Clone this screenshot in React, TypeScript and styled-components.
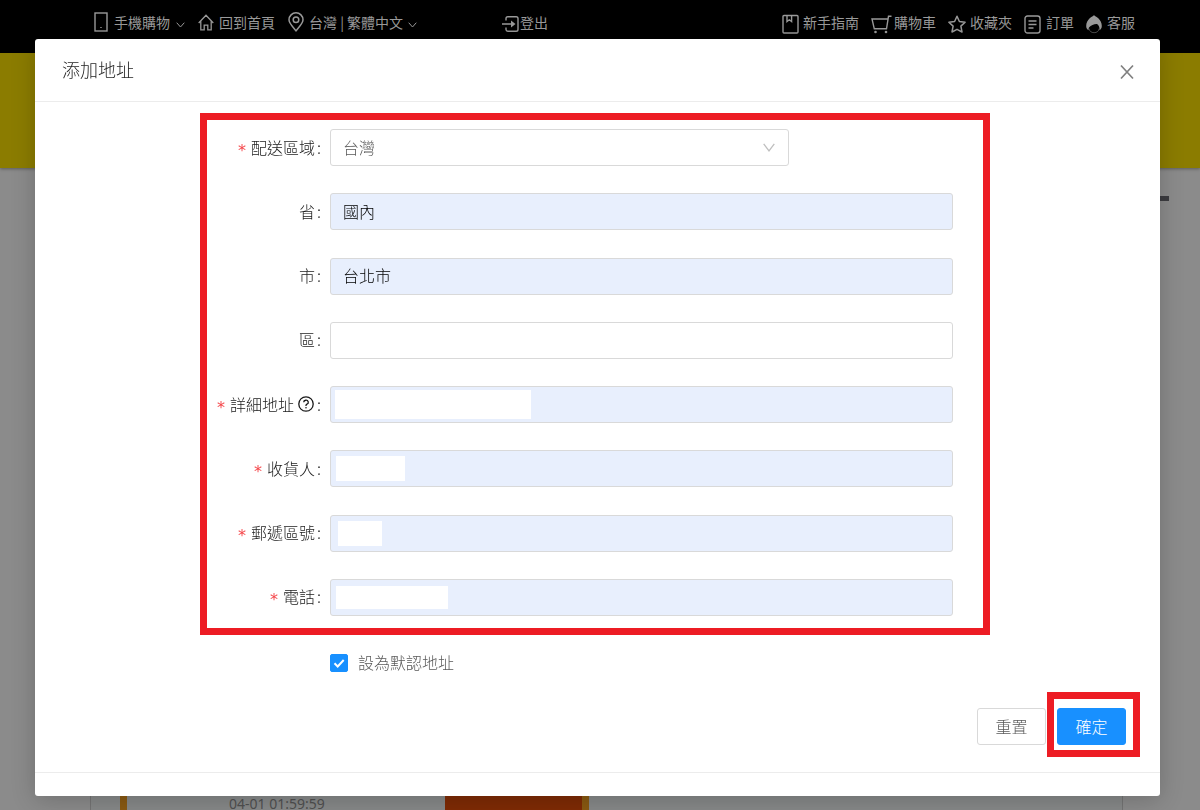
import React, { useState } from "react";
import styled, { createGlobalStyle, css } from "styled-components";

const GlobalStyle = createGlobalStyle`
  *, *::before, *::after { box-sizing: border-box; }
  body {
    margin: 0;
    font-family: "Noto Sans CJK TC", "Noto Sans", sans-serif;
    font-weight: 300;
    color: #333;
  }
  button, input, select { font: inherit; }
`;

const Page = styled.div`
  display: flex;
  flex-direction: column;
  height: 100vh;
  overflow: hidden;
  background: #8b8b8b;
`;

const TopBar = styled.header`
  display: flex;
  align-items: flex-start;
  justify-content: space-between;
  flex: none;
  height: 53px;
  padding: 12px 65px 0 94px;
  background: #000;
`;

const NavGroup = styled.nav<{ $gap: number }>`
  display: flex;
  align-items: center;
  gap: ${(p) => p.$gap}px;
`;

const NavLink = styled.a<{ $gap?: number; $push?: boolean; $lowIcon?: boolean }>`
  display: flex;
  align-items: center;
  gap: ${(p) => p.$gap ?? 5}px;
  margin-left: ${(p) => (p.$push ? 72 : 0)}px;
  height: 20px;
  font-size: 14px;
  line-height: 20px;
  font-weight: 400;
  white-space: nowrap;
  color: #9a9a9a;
  text-decoration: none;

  svg {
    margin-top: ${(p) => (p.$lowIcon ? 4 : 0)}px;
  }
`;

const Icon = styled.svg`
  display: block;
  flex: none;
  fill: none;
  stroke: currentColor;
`;

const NavChevron = styled(Icon)`
  align-self: flex-end;
  margin-bottom: 4px;
`;

const Banner = styled.div`
  flex: none;
  height: 115px;
  background: #8b7c00;
  box-shadow: 0 1px 3px rgba(0, 0, 0, 0.35);
`;

const Backdrop = styled.main`
  display: flex;
  flex-direction: column;
  flex: 1;
  justify-content: space-between;
  padding: 28px 31px 0 90px;
`;

const SideMark = styled.div`
  align-self: flex-end;
  width: 24px;
  height: 5px;
  background: #3c3c40;
`;

const OrderCard = styled.section`
  display: flex;
  align-items: stretch;
  height: 60px;
  margin-right: 46px;
  padding-left: 29px;
  border: solid #747474;
  border-width: 0 1px;
  background: #878989;
`;

const OrderTime = styled.time`
  display: flex;
  align-items: flex-end;
  width: 318px;
  padding-left: 102px;
  font: 400 14px/12px "Noto Sans", sans-serif;
  color: #505050;
`;

const Stripe = styled.div`
  width: 7px;
  background: #8a5a12;
`;

const OrderPhoto = styled.div`
  width: 137px;
  background: #7f2b05;
`;

const Overlay = styled.div`
  position: fixed;
  inset: 0;
  overflow: auto;
  padding: 39px 40px 14px 35px;
`;

const Dialog = styled.section`
  border-radius: 3px;
  background: #fff;
  box-shadow: 0 4px 24px rgba(0, 0, 0, 0.2);
`;

const DialogHeader = styled.header`
  display: flex;
  align-items: center;
  justify-content: space-between;
  height: 63px;
  padding: 0 26px 0 27px;
  border-bottom: 1px solid #ececec;
`;

const Title = styled.h1`
  margin: 0;
  padding-bottom: 2px;
  font-size: 18px;
  line-height: 26px;
  font-weight: 300;
  color: #262626;
`;

const CloseButton = styled.button`
  display: flex;
  padding: 3px 0 0;
  border: 0;
  background: none;
  color: #808080;
  cursor: pointer;
`;

const HighlightedFields = styled.div`
  display: flex;
  flex-direction: column;
  justify-content: space-between;
  min-height: 522px;
  margin: 11px 170px 0 165px;
  padding: 9px 30px 12px 0;
  border: 7px solid #ed1c24;
`;

const Row = styled.div`
  display: grid;
  grid-template-columns: 123px minmax(0, 1fr);
  align-items: center;
`;

const Label = styled.label<{ $required?: boolean }>`
  display: flex;
  align-items: center;
  justify-content: flex-end;
  padding: 0 9px 2px 0;
  font-size: 16px;
  line-height: 24px;
  white-space: nowrap;
  color: #1a1a1a;

  ${(p) =>
    p.$required &&
    css`
      &::before {
        content: "*";
        padding-top: 8px;
        margin-right: 5px;
        font-family: "DejaVu Sans", sans-serif;
        font-weight: 400;
        color: #f5474b;
      }
    `}

  &::after {
    content: ":";
    margin-left: 2px;
  }

  svg {
    margin: 0 1px 0 4px;
  }
`;

const Control = styled.div<{ $narrow?: boolean }>`
  position: relative;
  max-width: ${(p) => (p.$narrow ? "459px" : "none")};
`;

const fieldBox = css`
  display: block;
  width: 100%;
  height: 37px;
  padding: 0 12px 2px;
  border: 1px solid #d9d9d9;
  border-radius: 3px;
  font-size: 16px;
  outline: none;
`;

const TextInput = styled.input<{ $filled?: boolean }>`
  ${fieldBox}
  background: ${(p) => (p.$filled ? "#e8effd" : "#fff")};
  color: #000;
`;

const Select = styled.select`
  ${fieldBox}
  appearance: none;
  background: #fff;
  color: #595959;
`;

const SelectArrow = styled(Icon)`
  position: absolute;
  right: 14px;
  top: 14px;
  color: #bfbfbf;
  pointer-events: none;
`;

const Redaction = styled.span<{ $left: number; $width: number; $inset: number }>`
  position: absolute;
  inset-block: ${(p) => p.$inset}px;
  left: ${(p) => p.$left}px;
  width: ${(p) => p.$width}px;
  background: #fff;
`;

const DefaultOption = styled.label`
  display: flex;
  align-items: center;
  gap: 10px;
  width: fit-content;
  margin: 14px 0 0 295px;
  font-size: 16px;
  line-height: 26px;
  color: #595959;
`;

const CheckBox = styled.span`
  position: relative;
  display: flex;
  padding-top: 2px;

  input {
    appearance: none;
    width: 18px;
    height: 18px;
    margin: 0;
    border: 1px solid #1890ff;
    border-radius: 2px;
    background: #fff;
  }
  input:checked {
    background: #1890ff;
  }
  svg {
    position: absolute;
    left: 0;
    bottom: 0;
    color: #fff;
    pointer-events: none;
  }
`;

const Actions = styled.div`
  display: flex;
  justify-content: flex-end;
  gap: 11px;
  padding: 33px 34px 27px;
`;

const ActionButton = styled.button<{ $primary?: boolean }>`
  width: 69px;
  height: 37px;
  padding: 0 0 2px;
  border: 1px solid ${(p) => (p.$primary ? "#1890ff" : "#d9d9d9")};
  border-radius: 3px;
  background: ${(p) => (p.$primary ? "#1890ff" : "#fff")};
  color: ${(p) => (p.$primary ? "#fff" : "#595959")};
  font-size: 16px;
  cursor: pointer;
`;

const Spotlight = styled.div`
  position: relative;

  &::after {
    content: "";
    position: absolute;
    inset: -16px -14px -12px -10px;
    border: 7px solid #ed1c24;
    pointer-events: none;
  }
`;

const DialogFooter = styled.footer`
  height: 24px;
  border-top: 1px solid #ececec;
`;

const ChevronIcon = () => (
  <NavChevron width="9" height="6" viewBox="0 0 9 6">
    <path d="M.7 .7 4.5 5 8.3 .7" />
  </NavChevron>
);

const PhoneIcon = () => (
  <Icon width="14" height="20" viewBox="0 0 14 20">
    <rect x="1" y="1" width="12" height="18" strokeWidth="1.4" />
    <path d="M6.3 15.5h1.4" />
  </Icon>
);

const HomeIcon = () => (
  <Icon width="16" height="17" viewBox="0 0 16 17" strokeWidth="1.3">
    <path d="M.7 9 8 1.3 15.3 9M2.8 7.3v8.6h3.4v-4.8h3.6v4.8h3.4V7.3" />
  </Icon>
);

const PinIcon = () => (
  <Icon width="16" height="20" viewBox="0 0 16 20" strokeWidth="1.5">
    <path d="M8 18.8C5.5 15.4 1 11.6 1 7.8a7 7 0 0 1 14 0c0 3.8-4.5 7.6-7 11Z" />
    <circle cx="8" cy="7.7" r="2.8" />
  </Icon>
);

const LogoutIcon = () => (
  <Icon width="17" height="18" viewBox="0 0 17 18" strokeWidth="1.4">
    <path d="M4 5.5V3.5A1.8 1.8 0 0 1 5.8 1.7h8.4A1.8 1.8 0 0 1 16 3.5v11a1.8 1.8 0 0 1-1.8 1.8H5.8A1.8 1.8 0 0 1 4 14.5v-2M0 9h11" />
    <path d="M9 5.5 13.5 9 9 12.5Z" fill="currentColor" stroke="none" />
  </Icon>
);

const GuideIcon = () => (
  <Icon width="17" height="20" viewBox="0 0 17 20" strokeWidth="1.4">
    <rect x="1" y="1.5" width="15" height="17.5" rx="1" />
    <path d="M5 1.5v6L7.3 5.8 9.6 7.5v-6" />
  </Icon>
);

const CartIcon = () => (
  <Icon width="21" height="19" viewBox="0 0 21 19" strokeWidth="1.4">
    <path d="M20.5 1.3h-3l-2 12.5H3.3L1 4h15.8" />
    <circle cx="4.5" cy="17" r="1.3" fill="currentColor" stroke="none" />
    <circle cx="15" cy="17" r="1.3" fill="currentColor" stroke="none" />
  </Icon>
);

const StarIcon = () => (
  <Icon width="18" height="19" viewBox="0 0 18 19" strokeWidth="1.5" strokeLinejoin="round">
    <path d="m9 1.3 2.4 5.2 5.7.7-4.2 3.9 1.1 5.9L9 14.3 4 17l1.1-5.9L.9 7.2l5.7-.7Z" />
  </Icon>
);

const OrderIcon = () => (
  <Icon width="17" height="19" viewBox="0 0 17 19" strokeWidth="1.4">
    <rect x="1" y="1" width="15" height="17" rx="2.5" />
    <path d="M4.5 6h8M4.5 9.5h8M4.5 13h5" />
  </Icon>
);

const SupportIcon = () => (
  <Icon width="16" height="19" viewBox="0 0 16 19">
    <path
      d="M8 0c1 1.500 2.500 1.600 4.300 3.200C14.500 5.200 15.800 8 15.800 11c0 2-.9 3.500-2.300 4.200.4-3-.8-5-2.500-6.200C8.500 8.800 5 10 3 12.500c-.4.900-.5 1.800-.4 2.700C1 14.500.2 13 .2 11c0-3 1.300-5.800 3.500-7.800C5.500 1.600 7 1.500 8 0Z"
      fill="currentColor"
      stroke="none"
    />
    <path d="M3 13.5a5.2 5.2 0 0 0 10.2 0" strokeOpacity=".5" />
  </Icon>
);

const HelpIcon = () => (
  <Icon width="16" height="16" viewBox="0 0 16 16" strokeWidth="1.3">
    <circle cx="8" cy="8" r="7.2" />
    <path d="M5.7 6.3a2.3 2.1 0 1 1 3.3 1.9c-.7.3-1 .7-1 1.4v.3" />
    <circle cx="8" cy="11.7" r=".8" fill="currentColor" stroke="none" />
  </Icon>
);

type Field = {
  id: string;
  label: string;
  value?: string;
  required?: boolean;
  help?: boolean;
  filled?: boolean;
  redaction?: { left: number; width: number; inset: number };
};

const fields: Field[] = [
  { id: "province", label: "省", value: "國內", filled: true },
  { id: "city", label: "市", value: "台北市", filled: true },
  { id: "district", label: "區" },
  { id: "address", label: "詳細地址", required: true, help: true, filled: true, redaction: { left: 5, width: 196, inset: 4 } },
  { id: "receiver", label: "收貨人", required: true, filled: true, redaction: { left: 6, width: 69, inset: 6 } },
  { id: "postcode", label: "郵遞區號", required: true, filled: true, redaction: { left: 8, width: 44, inset: 6 } },
  { id: "phone", label: "電話", required: true, filled: true, redaction: { left: 6, width: 112, inset: 7 } },
];

export default function App() {
  const [isDefault, setIsDefault] = useState(true);

  return (
    <>
      <GlobalStyle />
      <Page>
        <TopBar>
          <NavGroup $gap={13}>
            <NavLink href="#" $gap={6}>
              <PhoneIcon />
              手機購物
              <ChevronIcon />
            </NavLink>
            <NavLink href="#">
              <HomeIcon />
              回到首頁
            </NavLink>
            <NavLink href="#">
              <PinIcon />
              台灣 | 繁體中文
              <ChevronIcon />
            </NavLink>
            <NavLink href="#" $gap={1} $push $lowIcon>
              <LogoutIcon />
              登出
            </NavLink>
          </NavGroup>
          <NavGroup $gap={12}>
            <NavLink href="#" $gap={4} $lowIcon>
              <GuideIcon />
              新手指南
            </NavLink>
            <NavLink href="#" $gap={2} $lowIcon>
              <CartIcon />
              購物車
            </NavLink>
            <NavLink href="#" $gap={4} $lowIcon>
              <StarIcon />
              收藏夾
            </NavLink>
            <NavLink href="#" $lowIcon>
              <OrderIcon />
              訂單
            </NavLink>
            <NavLink href="#" $lowIcon>
              <SupportIcon />
              客服
            </NavLink>
          </NavGroup>
        </TopBar>
        <Banner />
        <Backdrop>
          <SideMark />
          <OrderCard>
            <Stripe />
            <OrderTime>04-01 01:59:59</OrderTime>
            <OrderPhoto />
            <Stripe />
          </OrderCard>
        </Backdrop>
      </Page>

      <Overlay>
        <Dialog role="dialog" aria-labelledby="dialog-title">
          <DialogHeader>
            <Title id="dialog-title">添加地址</Title>
            <CloseButton type="button" aria-label="關閉">
              <Icon width="14" height="16" viewBox="0 0 14 16" strokeWidth="1.7">
                <path d="M1 1.5 13 14.5M13 1.5 1 14.5" />
              </Icon>
            </CloseButton>
          </DialogHeader>
          <form onSubmit={(e) => e.preventDefault()}>
            <HighlightedFields>
              <Row>
                <Label htmlFor="region" $required>
                  配送區域
                </Label>
                <Control $narrow>
                  <Select id="region" defaultValue="台灣">
                    <option>台灣</option>
                  </Select>
                  <SelectArrow width="12" height="9" viewBox="0 0 12 9" strokeWidth="1.3">
                    <path d="M.7 .8 6 7.8 11.3 .8" />
                  </SelectArrow>
                </Control>
              </Row>
              {fields.map((f) => (
                <Row key={f.id}>
                  <Label htmlFor={f.id} $required={f.required}>
                    {f.label}
                    {f.help && <HelpIcon />}
                  </Label>
                  <Control>
                    <TextInput id={f.id} type="text" defaultValue={f.value} $filled={f.filled} />
                    {f.redaction && (
                      <Redaction $left={f.redaction.left} $width={f.redaction.width} $inset={f.redaction.inset} />
                    )}
                  </Control>
                </Row>
              ))}
            </HighlightedFields>
            <DefaultOption>
              <CheckBox>
                <input type="checkbox" checked={isDefault} onChange={(e) => setIsDefault(e.target.checked)} />
                <Icon width="18" height="18" viewBox="0 0 18 18" strokeWidth="2">
                  <path d="m4.5 9.2 3.2 3.3 6-6.5" />
                </Icon>
              </CheckBox>
              設為默認地址
            </DefaultOption>
            <Actions>
              <ActionButton type="reset">重置</ActionButton>
              <Spotlight>
                <ActionButton type="submit" $primary>
                  確定
                </ActionButton>
              </Spotlight>
            </Actions>
          </form>
          <DialogFooter />
        </Dialog>
      </Overlay>
    </>
  );
}
